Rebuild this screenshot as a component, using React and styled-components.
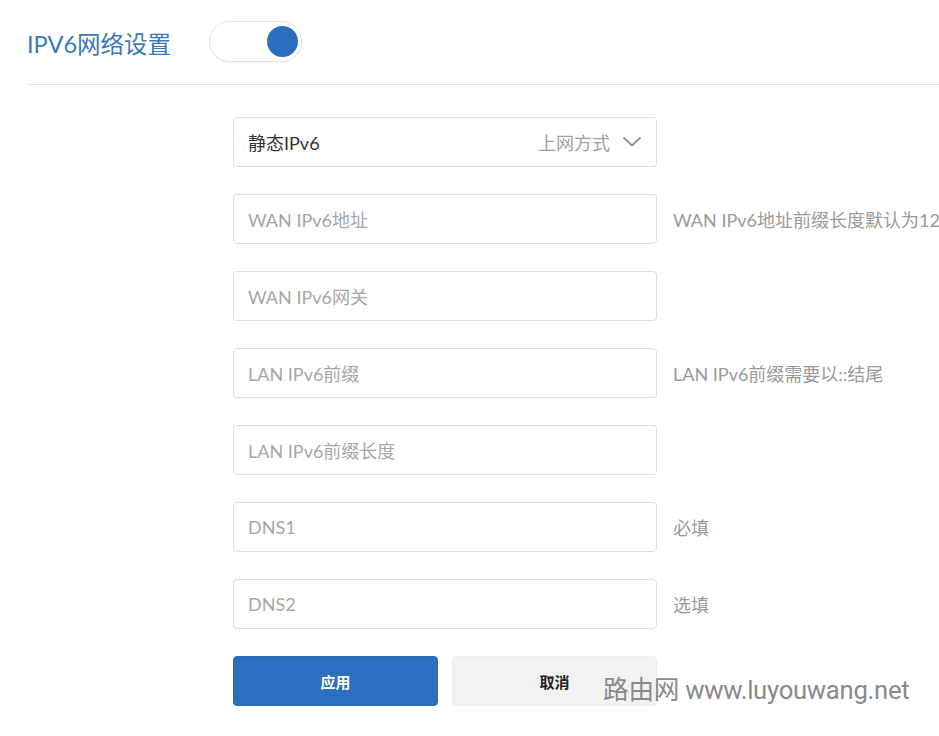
import React from "react";
import styled, { createGlobalStyle } from "styled-components";

const Global = createGlobalStyle`
  html, body { margin: 0; padding: 0; background: #fff; }
  body { font-family: "Lato", "Noto Sans CJK SC", sans-serif; overflow: hidden; }
  * { box-sizing: border-box; }
`;

const Page = styled.div`
  position: relative;
  width: 939px;
  height: 736px;
  padding-left: 27px;
  overflow: hidden;
`;

const Header = styled.div`
  display: flex;
  align-items: center;
  gap: 38px;
  height: 85px;
  padding-bottom: 2px;
  border-bottom: 1px solid #e2e2e2;
`;

const Title = styled.h1`
  margin: 0;
  margin-top: 4px;
  font-weight: 400;
  font-size: 23.5px;
  color: #3b78b5;
  font-family: "Lato", "Noto Sans CJK SC", sans-serif;
`;

const Toggle = styled.div`
  width: 93px;
  height: 41px;
  border: 1px solid #e3e3e3;
  border-radius: 21px;
  background: #fff;
  display: flex;
  align-items: center;
  justify-content: flex-end;
  padding-right: 3px;
  box-shadow: 0 1px 2px rgba(0, 0, 0, 0.04);
`;

const Knob = styled.span`
  width: 31px;
  height: 31px;
  border-radius: 50%;
  background: #2a6fbd;
`;

const Form = styled.div`
  margin-left: 206px;
  margin-top: 32px;
  display: grid;
  grid-template-columns: 424px auto;
  column-gap: 16px;
  row-gap: 27px;
  align-items: center;
`;

const Field = styled.div`
  height: 50px;
  border: 1px solid #dedede;
  border-radius: 4px;
  background: #fff;
  display: flex;
  align-items: center;
  padding: 0 14px;
  font-size: 18px;
  color: ${(p) => (p.$filled ? "#333" : "#a6a6a6")};
`;

const SelectValue = styled.span`
  flex: 1;
  color: #333;
`;

const SelectLabel = styled.span`
  color: #a0a0a0;
  margin-right: 12px;
`;

const Hint = styled.span`
  font-size: 18px;
  color: #9a9a9a;
  white-space: nowrap;
`;

const Buttons = styled.div`
  grid-column: 1 / 2;
  display: flex;
  gap: 14px;
`;

const Button = styled.div`
  width: 205px;
  height: 50px;
  border-radius: 4px;
  display: flex;
  align-items: center;
  justify-content: center;
  font-size: 15px;
  font-weight: 700;
  background: ${(p) => (p.$primary ? "#2a70bf" : "#f2f2f2")};
  color: ${(p) => (p.$primary ? "#fff" : "#222")};
  border: 1px solid ${(p) => (p.$primary ? "#2a6ab5" : "#ececec")};
`;

const Watermark = styled.div`
  position: absolute;
  left: 603px;
  top: 669px;
  font-size: 25.7px;
  color: #8a8a8a;
  font-family: "Roboto", "Noto Sans CJK SC", sans-serif;
  letter-spacing: -0.3px;
  white-space: nowrap;
`;

const Chevron = () => (
  <svg width="20" height="12" viewBox="0 0 20 12" fill="none">
    <path d="M1.5 1.5 L10 9.5 L18.5 1.5" stroke="#8f8f8f" strokeWidth="2" />
  </svg>
);

const rows = [
  { ph: "WAN IPv6地址", hint: "WAN IPv6地址前缀长度默认为128" },
  { ph: "WAN IPv6网关", hint: "" },
  { ph: "LAN IPv6前缀", hint: "LAN IPv6前缀需要以::结尾" },
  { ph: "LAN IPv6前缀长度", hint: "" },
  { ph: "DNS1", hint: "必填" },
  { ph: "DNS2", hint: "选填" },
];

export default function App() {
  return (
    <>
      <Global />
      <Page>
        <Header>
          <Title>IPV6网络设置</Title>
          <Toggle>
            <Knob />
          </Toggle>
        </Header>
        <Form>
          <Field $filled>
            <SelectValue>静态IPv6</SelectValue>
            <SelectLabel>上网方式</SelectLabel>
            <Chevron />
          </Field>
          <Hint />
          {rows.map((r) => (
            <React.Fragment key={r.ph}>
              <Field>{r.ph}</Field>
              <Hint>{r.hint}</Hint>
            </React.Fragment>
          ))}
          <Buttons>
            <Button $primary>应用</Button>
            <Button>取消</Button>
          </Buttons>
        </Form>
        <Watermark>路由网 www.luyouwang.net</Watermark>
      </Page>
    </>
  );
}
